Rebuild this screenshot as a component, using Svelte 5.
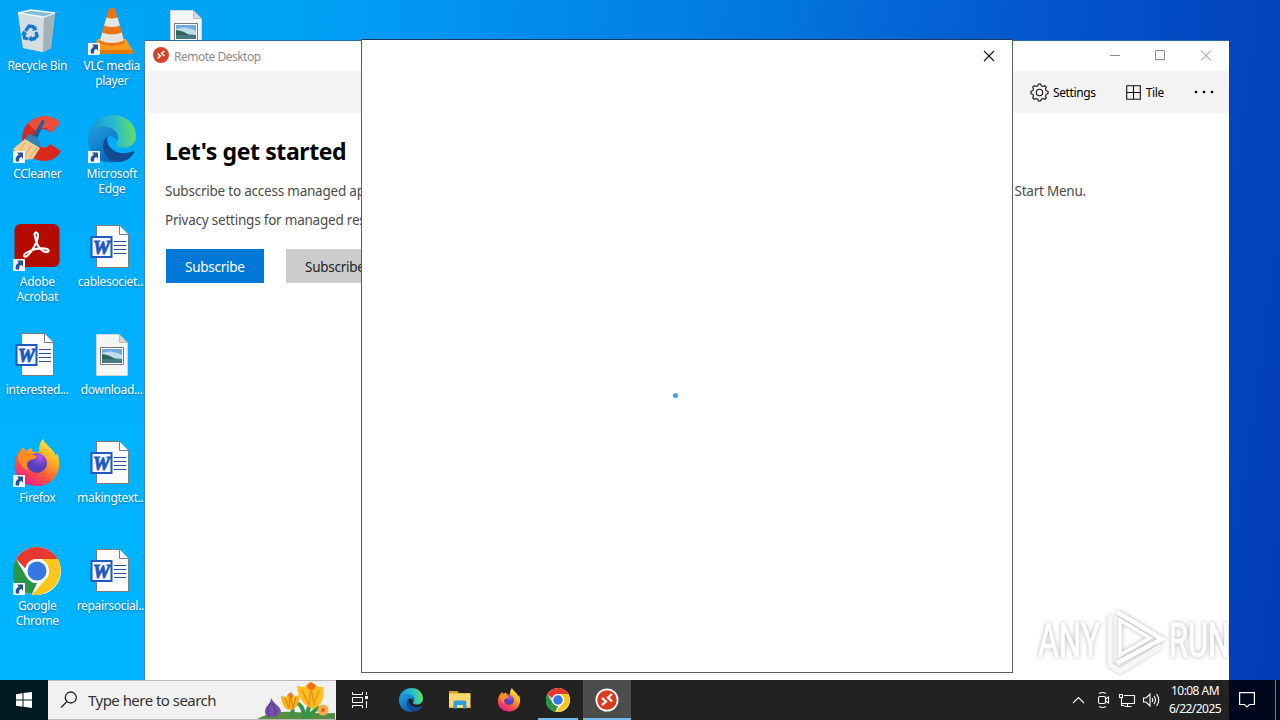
<script>
  const columns = [
    [
      { icon: 'bin', label: ['Recycle Bin'] },
      { icon: 'ccleaner', label: ['CCleaner'], shortcut: true },
      { icon: 'acrobat', label: ['Adobe', 'Acrobat'], shortcut: true },
      { icon: 'word', label: ['interested...'] },
      { icon: 'firefox', label: ['Firefox'], shortcut: true },
      { icon: 'chrome', label: ['Google', 'Chrome'], shortcut: true },
    ],
    [
      { icon: 'vlc', label: ['VLC media', 'player'], shortcut: true },
      { icon: 'edge', label: ['Microsoft', 'Edge'], shortcut: true },
      { icon: 'word', label: ['cablesociet...'] },
      { icon: 'image', label: ['download...'] },
      { icon: 'word', label: ['makingtext...'] },
      { icon: 'word', label: ['repairsocial...'] },
    ],
    [{ icon: 'image', label: [] }],
  ];

  const pinned = [
    { icon: 'edge' },
    { icon: 'explorer' },
    { icon: 'firefox' },
    { icon: 'chrome', state: 'running' },
    { icon: 'remote', state: 'active' },
  ];

  const gearPoints = Array.from({ length: 32 }, (_, i) => {
    // four points per tooth: two on the outer ring, two on the inner one
    const r = i % 4 < 2 ? 8.6 : 6.9;
    const a = ((Math.floor(i / 2) * 22.5 + (i % 2 ? 7 : -7)) * Math.PI) / 180;
    return `${(9.5 + r * Math.cos(a)).toFixed(2)},${(9.5 + r * Math.sin(a)).toFixed(2)}`;
  }).join(' ');
</script>

{#snippet appIcon(name)}
  <svg class="app-icon" viewBox="0 0 48 48">
    {#if name === 'bin'}
      <path d="M5 6 17 3 42 6 38 41 30 45 10 41Z" fill="#c3ced4" opacity=".9" />
      <path d="M5 6 31 10 30 45 10 41Z" fill="#d3dde2" />
      <path d="M31 10 42 6 38 41 30 45Z" fill="#a4b2ba" />
      <path d="M5 6 18 3 42 6 31 10Z" fill="#82bcd6" stroke="#edf4f7" stroke-width="1.3" />
      <g fill="none" stroke="#1679d1" stroke-width="3.300">
        <path d="m12.500 24 3.500-5 4 .5 2 3M23 25l1 4-3 3h-3M15 32l-3.500-1-.5-4" />
      </g>
      <path d="m19 24 5-1-1-4.500zM18.500 28.500v6.500l-3.500-3zM8 28l2.500-4.500 4 3.500z" fill="#1679d1" />
    {:else if name === 'ccleaner'}
      <path d="M47 8C39-2 20-1 12 12C4 28 14 46 31 46C39 46 45 42 48 36L37 29C32 36 23 32 23 23C23 14 33 11 38 18Z" fill="#d9281e" />
      <path d="M47 8C39-2 22 0 15 9L24 17C29 11 35 12 38 18Z" fill="#ef4d3b" />
      <path d="m29 5 3 1-8 18-5-2z" fill="#245e91" />
      <path d="m15 19 9 3 4 7-4 5-12-9z" fill="#3181bb" />
      <path d="M12 24 27 33 20 44 8 45 0 34Z" fill="#f3cd91" />
      <path d="m12 28-5 7m11-4-6 10m12-8-7 9" stroke="#d6a765" fill="none" />
    {:else if name === 'vlc'}
      <path d="M10 32h28l7 12q1 3-2 3H5q-3 0-2-3z" fill="#f6991c" />
      <path d="M3 43h42v2q0 2-2 2H5q-2 0-2-2z" fill="#e3780a" />
      <path d="M21 2q3-2 6 0l10 34q-13 6-26 0z" fill="#ee740f" />
      <path d="M18.500 10.500q5.500 2 11 0l2.500 8q-8 3-16 0zM14.200 25.500q9.800 4 19.600 0l2.200 8q-12 5-24 0z" fill="#e4e4e1" />
    {:else if name === 'edge'}
      <defs>
        <linearGradient id="edge-top" x1="0" y1=".6" x2="1" y2=".5">
          <stop stop-color="#1791d8" /><stop offset=".55" stop-color="#27bad0" /><stop offset="1" stop-color="#66df62" />
        </linearGradient>
        <linearGradient id="edge-left" x1="0" y1="0" x2=".5" y2="1">
          <stop stop-color="#229fdf" /><stop offset="1" stop-color="#0a67bd" />
        </linearGradient>
      </defs>
      <path d="M0 22C2 8 12 0 25 0c14 0 23 10 23 21 0 8-6 12-13 12-6 0-9-3-6-6 4-7-2-13-10-13C10 13 3 17 0 22Z" fill="url(#edge-top)" />
      <path d="M0 24c1-8 9-14 19-12 9 1 12 8 10 14-2-4-6-6-9-4-6 4-5 18 8 25C12 50 0 39 0 24Z" fill="url(#edge-left)" />
      <path d="M20 21c-10 8-4 25 10 26 7 0 13-4 16-9 1-2 0-2-1-2-12 6-26-1-26-12Z" fill="#124b91" />
    {:else if name === 'acrobat'}
      <rect x="1.500" y="1" width="45" height="43" rx="6" fill="#b30b00" />
      <path d="M22 13c-2-4 3-5 3-1 0 7-7 18-11 21-3 2-4-1-1-3 6-4 16-6 21-4 4 2 0 4-4 2-5-3-7-8-8-15Z" fill="none" stroke="#fff" stroke-width="2.100" />
    {:else if name === 'word'}
      <path d="M8.500 2.500h23l9 9v33h-32z" fill="#fbfbfb" stroke="#7a7a7a" />
      <path d="M31.500 2.500v9h9" fill="#fff" stroke="#7a7a7a" />
      <path d="M26 18.500h12M26 22.500h12M26 26.500h12M26 30.500h12" stroke="#2a5699" stroke-width="1.2" />
      <path d="M2.500 13h22v22h-22z" fill="#2058bd" />
      <path d="M4.500 15h18v18h-18z" fill="#fff" opacity=".94" />
      <text x="13.500" y="30.500" text-anchor="middle" textLength="17" lengthAdjust="spacingAndGlyphs" class="word-mark">W</text>
    {:else if name === 'image'}
      <path d="M8.500 3.500h23l8 8v33h-31z" fill="#f5f5f5" stroke="#d1d1d1" />
      <path d="M31.500 3.500v8h8z" fill="#d8d8d8" stroke="#bbb" />
      <path d="M12.500 16.500h23v17h-23z" fill="#fff" stroke="#707b84" />
      <path d="M14 18h20v14H14z" fill="#6fa9e0" />
      <path d="M14 22q9-4 20 2v4H14z" fill="#bfdcee" />
      <path d="M14 27q8 0 20 1v4H14z" fill="#467982" />
      <path d="M14 23q8 1 13 5H14z" fill="#2f6558" />
    {:else if name === 'firefox'}
      <defs>
        <linearGradient id="fox-body" x1=".85" y1=".05" x2=".3" y2="1">
          <stop stop-color="#fff044" /><stop offset=".35" stop-color="#ffad22" /><stop offset=".67" stop-color="#fc583d" /><stop offset="1" stop-color="#ee178c" />
        </linearGradient>
        <radialGradient id="fox-globe" cx=".65" cy=".2">
          <stop stop-color="#b454ef" /><stop offset="1" stop-color="#5440bb" />
        </radialGradient>
      </defs>
      <path d="M7 12 10 8 13 12 18 9 20 13 26 13C26 7 27 3 30 0c3 7 10 9 13 17l1-3c7 17-3 33-20 33C9 47 0 36 2 23c1-5 2-8 5-11Z" fill="url(#fox-body)" />
      <circle cx="24" cy="24" r="10" fill="url(#fox-globe)" />
      <path d="M5 15c7-2 12-1 19 2-1 4-7 3-9 6-2 2-2 5 0 8-6-1-10-8-10-16z" fill="#ff8b21" />
    {:else if name === 'chrome'}
      <circle cx="24" cy="24" r="24" fill="#fff" />
      <path d="M24 0c9 0 17 5 21 12H24c-7 0-11 5-11 10L3 12C8 4 16 0 24 0Z" fill="#e6392f" />
      <path d="M3 12 13.600 30q4 6 10.400 6l-5 11C1 45-5 26 3 12Z" fill="#299646" />
      <path d="M45 12c8 15-3 37-25 36h-1l15.400-18c3-6 0-13-5.400-18Z" fill="#fdc61a" />
      <circle cx="24" cy="24" r="12" fill="#fff" />
      <circle cx="24" cy="24" r="9.500" fill="#3478e6" />
    {:else if name === 'explorer'}
      <path d="M2 6h17l3 4h22v30H2z" fill="#d9a11c" />
      <path d="M2 11h43v29H2z" fill="#ffda70" />
      <path d="M11 28q0-3 3-3h20q3 0 3 3v13h-7v-7H18v7h-7z" fill="#359be1" />
      <path d="M2 37h8v3H2zm36 0h7v3h-7z" fill="#efb834" />
    {:else if name === 'remote'}
      <circle cx="24" cy="24" r="23" fill="#fff" />
      <circle cx="24" cy="24" r="19.500" fill="#d83b21" />
      {@render remoteArrows()}
    {/if}
  </svg>
{/snippet}

{#snippet remoteArrows()}
  <path d="m14 20 8 7-8 7M34 12l-8 7 8 8" fill="none" stroke="#fff" stroke-width="4.500" />
{/snippet}

<div class="screen">
  <main class="desktop">
    {#each columns as items}
      <div class="icon-column">
        {#each items as item}
          <div class="desktop-icon">
            <div class="picture">
              {@render appIcon(item.icon)}
              {#if item.shortcut}
                <svg class="shortcut" viewBox="0 0 12 12">
                  <path d="M0 0h12v12H0z" fill="#f7f7f7" />
                  <path d="M4 1.500h6v6L8 5.700Q5.700 7 6 10.500H3Q1.500 6 5.800 3.500Z" fill="#24539b" />
                </svg>
              {/if}
            </div>
            <div class="label">
              {#each item.label as line}<span>{line}</span>{/each}
            </div>
          </div>
        {/each}
      </div>
    {/each}
  </main>

  <section class="window">
    <header class="titlebar">
      <svg class="title-icon" viewBox="0 0 48 48">
        <circle cx="24" cy="24" r="24" fill="#d6432b" />
        {@render remoteArrows()}
      </svg>
      <span class="title">Remote Desktop</span>
      <svg class="window-controls" viewBox="0 0 110 16">
        <path d="M4 8.500h10M49.500 3.500h9v9h-9zM95 3.500l10 10m0-10-10 10" />
      </svg>
    </header>
    <nav class="toolbar">
      <div class="tool settings">
        <svg viewBox="0 0 19 19">
          <polygon points={gearPoints} />
          <circle cx="9.500" cy="9.500" r="3.200" />
        </svg>
        <span>Settings</span>
      </div>
      <div class="tool tile">
        <svg viewBox="0 0 15 15"><path d="M.7.7h13.600v13.600H.7zM7.500 1v13M1 7.500h13" /></svg>
        <span>Tile</span>
      </div>
      <svg class="more" viewBox="0 0 20 4">
        <circle cx="2" cy="2" r="1.300" /><circle cx="10" cy="2" r="1.300" /><circle cx="18" cy="2" r="1.300" />
      </svg>
    </nav>
    <div class="content">
      <h1>Let's get started</h1>
      <div class="intro">
        <p>Subscribe to access managed apps</p>
        <p>Start Menu.</p>
      </div>
      <p>Privacy settings for managed resources</p>
      <div class="actions">
        <button class="primary">Subscribe</button>
        <button>Subscribe with URL</button>
      </div>
    </div>
  </section>

  <section class="dialog">
    <svg class="close" viewBox="0 0 12 12"><path d="m1 1 10 10M11 1 1 11" /></svg>
    <span class="spinner"></span>
  </section>

  <svg class="watermark" viewBox="0 0 204 70">
    <text x="2" y="51" textLength="62" lengthAdjust="spacingAndGlyphs">ANY</text>
    <text x="133" y="51" textLength="61" lengthAdjust="spacingAndGlyphs">RUN</text>
    <g fill="none" stroke="#fff">
      <path d="M81 6 126 33 81 57" stroke-width="4.500" />
      <path d="M84 14v35l30-17Z" stroke-width="3.500" />
      <path d="M74 9v50l10 6 41-25" stroke-width="5" opacity=".8" />
    </g>
  </svg>

  <footer class="taskbar">
    <div class="start">
      <svg viewBox="0 0 16 16"><path d="m0 2.300 6.500-1V7.500H0zM7.500 1.100 16 0v7.500H7.500zM0 8.500h6.500v6.200L0 13.800zM7.500 8.500H16V16l-8.500-1.200z" /></svg>
    </div>
    <div class="search">
      <svg class="magnifier" viewBox="0 0 18 18"><circle cx="10.800" cy="6.500" r="5.500" /><path d="m7 10.500-6 6" /></svg>
      <span>Type here to search</span>
      <svg class="flowers" viewBox="0 0 80 38">
        <path d="M1 38Q17 29 38 31T79 32v6z" fill="#568d42" />
        <path d="M36 36Q38 27 34 20M47 37Q55 29 53 18M47 37Q49 26 41 22M49 36q10-5 14-11" fill="none" stroke="#369447" stroke-width="4" />
        <path d="M15 17c3 6 9 8 10 13q-3 6-9 6-7 0-7-5c0-7 6-7 6-14Z" fill="#7750a7" />
        <path d="M15 21q-5 7-2 14m4-12q4 7 2 12" stroke="#4f3486" fill="none" />
        <path d="m25 15 5 1 4-4 3 4 6-2q1 13-8 15-9 0-10-14Z" fill="#f9b51a" />
        <path d="m29 17 4 10 1-12 3 12 3-11" fill="none" stroke="#e87d1a" stroke-width="1.200" />
        <path d="m31 14 4-3 3 4-3 3z" fill="#f07822" />
        <path d="m41 5 7 1 6-5 5 4 8 1q3 17-10 22Q43 23 41 5Z" fill="#ffbf20" />
        <path d="m46 9 7 15 2-19 3 18 5-14" fill="none" stroke="#ef941c" stroke-width="1.500" />
        <path d="m51 4 4-3 5 3-2 5-6-1Z" fill="#f2711f" />
        <circle cx="67" cy="29" r="5.500" fill="#f7ad4d" /><circle cx="67" cy="29" r="2" fill="#dd641f" />
      </svg>
    </div>
    <div class="task-view">
      <svg viewBox="0 0 17 16"><path d="M.5 0v2.500h10V0M.5 5.500h10v5H.5zM.5 16v-2.500h10V16M14.500 0v3m0 6v7" /><path class="knob" d="M13 4h3v3h-3z" /></svg>
    </div>
    <div class="pinned">
      {#each pinned as app}
        <div class="task {app.state ?? ''}">{@render appIcon(app.icon)}</div>
      {/each}
    </div>
    <div class="tray">
      <svg viewBox="0 0 90 20">
        <path d="m2 13 5.500-5.500L13 13" />
        <rect x="27.500" y="6.500" width="7" height="7" rx="1.500" />
        <path d="m34.500 9 3-2v6l-3-2M28 3.500q3.500-2 7 0M28 16.500q3.500 2 7 0" />
        <path d="M53 5.500h10.500v8H50.500v-4M48.500 4.500h3v3h-3zM50.500 7.500v8h3m3-2v3m-3 0h7" />
        <path d="M72.500 8h2.500l4-4v12l-4-4h-2.500zM81 8q1.500 2 0 4m2-6q3 4 0 8m2.500-10q4.500 6 0 12" />
      </svg>
    </div>
    <div class="clock"><span>10:08 AM</span><span>6/22/2025</span></div>
    <div class="action-center">
      <svg viewBox="0 0 16 16"><path d="M.6.600h14.800v11.900H10.500L8 15l-2.500-2.500H.6z" /></svg>
    </div>
  </footer>
</div>

<style>
  :global(body) {
    overflow: hidden;
  }

  .screen {
    position: relative;
    display: flex;
    flex-direction: column;
    width: 1280px;
    height: 720px;
    overflow: hidden;
    font-family: 'Noto Sans', 'Open Sans', sans-serif;
    background:
      linear-gradient(180deg, rgba(0, 178, 255, 0) 0, rgba(0, 178, 255, 0.4) 100px, #00b0ff 280px, #00b4ff 640px) 0 0 / 145px 100% no-repeat,
      linear-gradient(98deg, #00a5f7 0, #00a3f6 21%, #028aec 40%, #0275de 57%, #0459cf 73%, #0346c0 89%, #033db8 100%);
  }

  .desktop {
    flex: 1;
    display: flex;
    min-height: 0;
  }

  .icon-column {
    width: 74.5px;
    padding-top: 7px;
    box-sizing: border-box;
  }

  .desktop-icon {
    display: flex;
    flex-direction: column;
    align-items: center;
    height: 108px;
  }

  .picture {
    position: relative;
    width: 48px;
    height: 48px;
    flex: none;
  }

  .app-icon {
    display: block;
    width: 100%;
    height: 100%;
  }

  .word-mark {
    font: italic bold 19px 'Liberation Serif', serif;
    fill: #2058bd;
    stroke: #2058bd;
    stroke-width: 0.9;
  }

  .shortcut {
    position: absolute;
    left: 0;
    bottom: 0;
    width: 12px;
    height: 12px;
  }

  .label {
    display: flex;
    flex-direction: column;
    align-items: center;
    margin-top: 3px;
    font-size: 12px;
    line-height: 15px;
    letter-spacing: -0.32px;
    white-space: nowrap;
    color: #fff;
    text-shadow: 0 1px 2px rgba(0, 50, 90, 0.55);
  }

  .window {
    position: absolute;
    left: 144px;
    top: 40px;
    width: 1085px;
    height: 640px;
    box-sizing: border-box;
    border-top: 1px solid #2c6c9d;
    border-left: 1px solid #3b84ad;
    background: #fff;
  }

  .titlebar {
    display: flex;
    align-items: center;
    height: 30px;
    padding: 0 13px 0 8px;
    box-sizing: border-box;
    color: #8b8b8b;
  }

  .title-icon {
    width: 16px;
    height: 16px;
    margin: 0 5px 2px 0;
  }

  .title {
    font-size: 12px;
    letter-spacing: -0.5px;
  }

  .window-controls {
    width: 110px;
    height: 16px;
    margin: 0 0 2px auto;
    fill: none;
    stroke: #8d8d8d;
  }

  .toolbar {
    display: flex;
    align-items: center;
    justify-content: flex-end;
    height: 42px;
    margin-left: 3px;
    padding-right: 15px;
    background: #f3f3f3;
    font-size: 12px;
    letter-spacing: -0.35px;
  }

  .tool {
    display: flex;
    align-items: center;
  }

  .tool svg {
    fill: none;
    stroke: #111;
    stroke-width: 1.1;
  }

  .settings {
    gap: 4px;
    margin-right: 30px;
  }

  .settings svg {
    width: 19px;
    height: 19px;
  }

  .tile {
    gap: 5px;
    margin-right: 30px;
  }

  .tile svg {
    width: 15px;
    height: 15px;
  }

  .more {
    width: 20px;
    height: 4px;
    fill: #000;
  }

  .content {
    padding: 22px 0 0 20px;
    color: #4b4b4b;
    font-size: 14px;
  }

  h1 {
    margin: 0;
    color: #000;
    font-size: 23px;
    line-height: 32px;
    letter-spacing: -0.4px;
  }

  p {
    margin: 0;
    font-size: 13.5px;
    line-height: 29px;
    letter-spacing: -0.22px;
    white-space: nowrap;
  }

  .intro {
    display: flex;
    justify-content: space-between;
    margin-top: 10px;
    padding-right: 143px;
  }

  .actions {
    display: flex;
    gap: 22px;
    margin: 14px 0 0 1px;
  }

  button {
    height: 34px;
    padding: 2px 19px 0;
    border: 0;
    background: #ccc;
    color: #222;
    font: inherit;
    font-size: 13.5px;
    letter-spacing: -0.25px;
    text-align: left;
    white-space: nowrap;
  }

  .primary {
    width: 98px;
    background: #0078d7;
    color: #fff;
  }

  .dialog {
    position: absolute;
    left: 361px;
    top: 39px;
    width: 652px;
    height: 634px;
    box-sizing: border-box;
    border: 1px solid #5c5c5c;
    border-top-color: #183a62;
    background: #fff;
  }

  .close {
    position: absolute;
    top: 10px;
    right: 17px;
    width: 12px;
    height: 12px;
    fill: none;
    stroke: #111;
    stroke-width: 1.1;
  }

  .spinner {
    position: absolute;
    left: 311px;
    top: 353px;
    width: 5px;
    height: 5px;
    border-radius: 50%;
    background: #4a9fd8;
  }

  .watermark {
    position: absolute;
    left: 1036px;
    top: 606px;
    width: 204px;
    height: 70px;
    overflow: visible;
    opacity: 0.75;
    filter: drop-shadow(0 0 2px rgba(0, 0, 0, 0.4));
  }

  .watermark text {
    font: 48px Roboto, sans-serif;
    fill: #fff;
    stroke: #fff;
    stroke-width: 1;
  }

  .taskbar {
    display: flex;
    height: 40px;
    flex: none;
    position: relative;
    background: #222;
    color: #fff;
  }

  .start {
    display: flex;
    align-items: center;
    justify-content: center;
    width: 48px;
    background: #001a24;
  }

  .start svg {
    width: 16px;
    height: 16px;
    fill: #fff;
  }

  .search {
    display: flex;
    align-items: center;
    width: 288px;
    padding-left: 12px;
    box-sizing: border-box;
    border: solid #b8b8b8;
    border-width: 1px 0;
    background: #f1f1f1;
    color: #333;
    font-size: 15px;
    letter-spacing: -0.53px;
  }

  .magnifier {
    width: 18px;
    height: 18px;
    margin-right: 10px;
    fill: none;
    stroke: #222;
    stroke-width: 1.3;
  }

  .flowers {
    width: 80px;
    height: 38px;
    margin-left: auto;
  }

  .task-view {
    display: flex;
    align-items: center;
    width: 50px;
    padding-left: 16px;
    box-sizing: border-box;
  }

  .task-view svg {
    width: 17px;
    height: 16px;
    fill: none;
    stroke: #fff;
  }

  .task-view .knob {
    fill: #fff;
    stroke: none;
  }

  .pinned {
    display: flex;
    gap: 1px;
    padding-left: 1px;
  }

  .task {
    display: flex;
    align-items: center;
    justify-content: center;
    width: 48px;
    box-sizing: border-box;
  }

  .task .app-icon {
    width: 24px;
    height: 24px;
  }

  .running {
    background: linear-gradient(#76b9ed, #76b9ed) center bottom / 40px 2px no-repeat;
  }

  .active {
    background: linear-gradient(#76b9ed, #76b9ed) center bottom / 48px 2px no-repeat #4d4d4d;
  }

  .tray {
    display: flex;
    align-items: center;
    margin-left: auto;
  }

  .tray svg {
    width: 90px;
    height: 20px;
    fill: none;
    stroke: #fff;
    stroke-width: 1.1;
  }

  .clock {
    display: flex;
    flex-direction: column;
    align-items: center;
    justify-content: center;
    width: 68px;
    font-size: 12px;
    line-height: 18px;
    letter-spacing: -0.55px;
  }

  .action-center {
    display: flex;
    align-items: center;
    width: 51px;
    padding-left: 10px;
    box-sizing: border-box;
    background: linear-gradient(#778, #778) 46px 0 / 1px 100% no-repeat #00081d;
  }

  .action-center svg {
    width: 16px;
    height: 16px;
    fill: none;
    stroke: #fff;
    stroke-width: 1.2;
  }
</style>
